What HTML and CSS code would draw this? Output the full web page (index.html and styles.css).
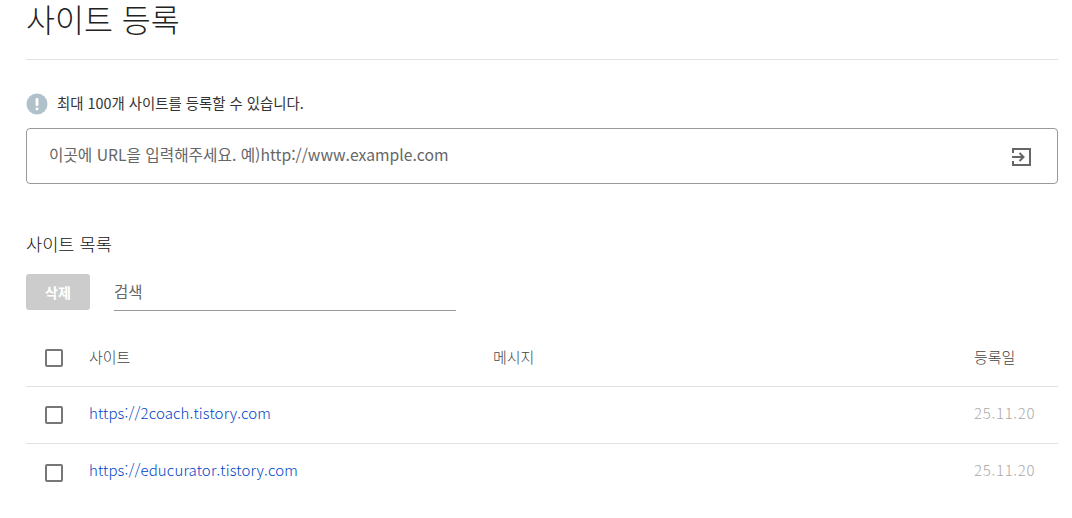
FILE: index.html
```html
<!DOCTYPE html>
<html lang="ko">
<head>
  <meta charset="UTF-8">
  <title>사이트 등록</title>
  <link rel="stylesheet" href="styles.css">
</head>
<body>
  <main class="page">
    <h1 class="page-title">사이트 등록</h1>

    <p class="notice">
      <svg class="notice-icon" viewBox="0 0 22 22" width="22" height="22" aria-hidden="true">
        <circle cx="11" cy="11" r="10.5" fill="#b1c1ca"/>
        <rect x="9.6" y="5" width="2.8" height="8" rx="1" fill="#fff"/>
        <rect x="9.6" y="14.4" width="2.8" height="2.8" rx="1" fill="#fff"/>
      </svg>
      <span class="notice-text">최대 100개 사이트를 등록할 수 있습니다.</span>
    </p>

    <form class="url-form">
      <input class="url-input" type="text" placeholder="이곳에 URL을 입력해주세요. 예)http://www.example.com">
      <button class="url-submit" type="button" aria-label="등록">
        <svg viewBox="0 0 19 18" width="19" height="18" fill="none" stroke="#666" stroke-width="2">
          <path d="M1 5V1h17v16H1v-4"/>
          <path d="M0 9h11"/>
          <path d="M7.5 5l4 4-4 4"/>
        </svg>
      </button>
    </form>

    <h2 class="section-title">사이트 목록</h2>

    <div class="toolbar">
      <button class="delete-btn" type="button">삭제</button>
      <input class="search-input" type="text" placeholder="검색">
    </div>

    <div class="site-list">
      <div class="site-row site-head">
        <span class="check"></span>
        <span class="col-site">사이트</span>
        <span class="col-msg">메시지</span>
        <span class="col-date">등록일</span>
      </div>
      <div class="site-row">
        <span class="check"></span>
        <a class="col-site" href="#">https://2coach.tistory.com</a>
        <span class="col-msg"></span>
        <span class="col-date">25.11.20</span>
      </div>
      <div class="site-row">
        <span class="check"></span>
        <a class="col-site" href="#">https://educurator.tistory.com</a>
        <span class="col-msg"></span>
        <span class="col-date">25.11.20</span>
      </div>
    </div>
  </main>
</body>
</html>
```

FILE: styles.css
```css
* { box-sizing: border-box; margin: 0; padding: 0; }

body {
  background: #fff;
  color: #333;
  font-family: "Noto Sans CJK KR", "Noto Sans", sans-serif;
  overflow: hidden;
}

.page { padding: 0 14px 0 26px; }

.page-title {
  height: 60px;
  border-bottom: 1px solid #e2e2e2;
  font-size: 31.5px;
  font-weight: 300;
  line-height: 36px;
  color: #222;
}

.notice {
  display: flex;
  align-items: center;
  gap: 9px;
  margin-top: 32px;
  height: 24px;
  font-size: 14.4px;
  color: #333;
}

.notice-text { margin-top: -4px; }

.url-form {
  display: flex;
  align-items: center;
  height: 56px;
  margin-top: 12px;
  border: 1px solid #999;
  border-radius: 4px;
}

.url-input {
  flex: 1;
  height: 100%;
  padding: 0 22px 4px;
  border: none;
  outline: none;
  background: none;
  font: inherit;
  font-size: 15.7px;
}

.url-input::placeholder, .search-input::placeholder { color: #666; opacity: 1; }

.url-submit {
  display: flex;
  margin: 2px 26px 0 0;
  border: none;
  background: none;
  cursor: pointer;
}

.section-title {
  margin-top: 48px;
  height: 24px;
  font-size: 17.6px;
  font-weight: 300;
  line-height: 24px;
  color: #111;
}

.toolbar {
  display: flex;
  align-items: stretch;
  gap: 24px;
  height: 37px;
  margin-top: 18px;
}

.delete-btn {
  width: 64px;
  height: 36px;
  border: none;
  border-radius: 3px;
  background: #ccc;
  color: #fff;
  font: inherit;
  font-size: 14px;
  font-weight: 700;
}

.search-input {
  width: 342px;
  padding-bottom: 3px;
  border: none;
  border-bottom: 1px solid #999;
  outline: none;
  font: inherit;
  font-size: 15.5px;
}

.site-list { margin-top: 19px; }

.site-row {
  display: flex;
  align-items: center;
  height: 57px;
  border-bottom: 1px solid #e2e2e2;
  font-size: 15px;
  font-weight: 300;
}

.site-row:last-child { border-bottom: none; }

.site-head { color: #444; }

.check {
  width: 18px;
  height: 18px;
  margin-left: 19px;
  border: 2px solid #777;
  border-radius: 2px;
}

.col-site {
  width: 404px;
  margin: -6px 0 0 26px;
  color: #0044c4;
  letter-spacing: 0.12px;
  text-decoration: none;
}

.site-head .col-site { margin-top: -4px; color: #444; letter-spacing: 0; }

.col-msg { flex: 1; margin-top: -4px; }

.col-date {
  width: 84px;
  margin-top: -6px;
  color: #aaa;
  letter-spacing: 0.7px;
}

.site-head .col-date { margin-top: -4px; color: #444; letter-spacing: 0; }
```
